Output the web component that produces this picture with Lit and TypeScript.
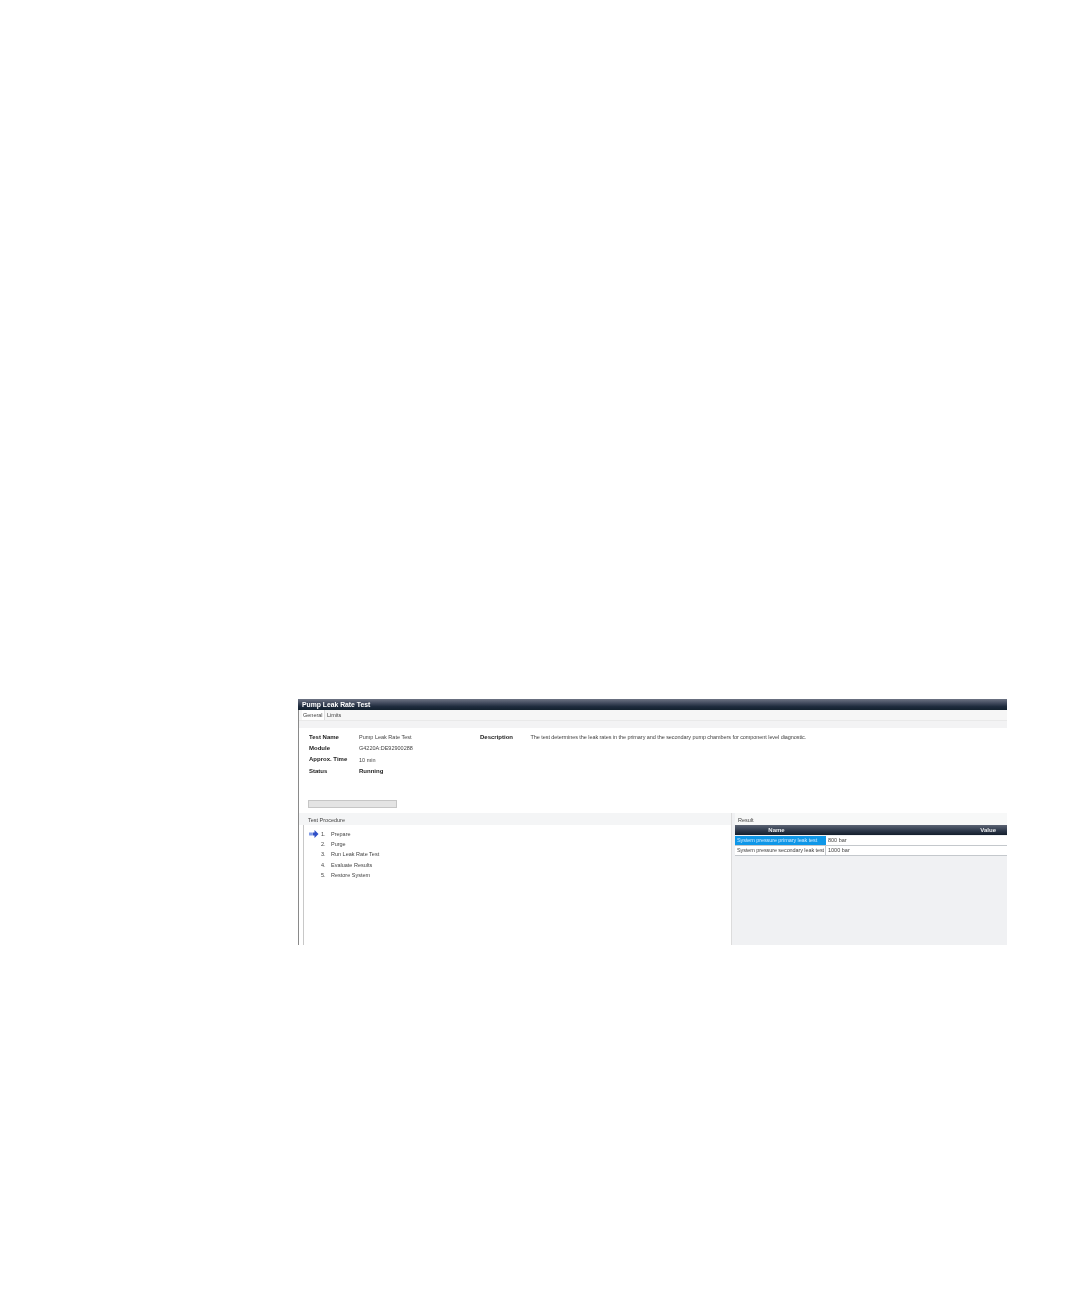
import { LitElement, html, css } from "lit";
import { customElement } from "lit/decorators.js";

const info: [string, string, boolean][] = [
  ["Test Name", "Pump Leak Rate Test", false],
  ["Module", "G4220A:DE92900288", false],
  ["Approx. Time", "10 min", false],
  ["Status", "Running", true],
];
const steps = ["Prepare", "Purge", "Run Leak Rate Test", "Evaluate Results", "Restore System"];

@customElement("app-root")
export class AppRoot extends LitElement {
  static styles = css`
    :host { display: block; height: 1296px; background: #fff; font-family: "Liberation Sans", Arial, sans-serif; color: #444; overflow: hidden; }
    .page { padding: 699px 0 0 298px; }
    .win { width: 709px; height: 246px; display: flex; flex-direction: column; overflow: hidden; filter: blur(0.3px); font-size: 5.5px; }
    .title { height: 11px; flex: none; box-sizing: border-box; padding-left: 4px; background: linear-gradient(#6d7484 0%, #454d60 35%, #1d2a3c 70%, #14222f 100%); color: #fff; font-weight: 700; font-size: 6.8px; line-height: 11px; }
    .body { flex: 1; min-height: 0; display: flex; flex-direction: column; border-left: 1px solid #8a8a8a; }
    .tabs { height: 11px; flex: none; box-sizing: border-box; display: flex; align-items: flex-end; padding-left: 3px; background: #f6f6f6; border-bottom: 1px solid #e9e9e9; }
    .tab { padding: 0 3px 0 2px; line-height: 10px; height: 10px; }
    .tab.on { background: #fff; padding: 0 0 0 1px; width: 23px; box-sizing: border-box; border-right: 1px solid #dedede; }
    .strip { height: 7px; flex: none; background: #f3f3f4; }
    .info { height: 85px; flex: none; box-sizing: border-box; display: flex; padding: 3.5px 0 0 10px; position: relative; background: #fff; }
    .grid { width: 171px; flex: none; display: grid; grid-template-columns: 50px 1fr; grid-auto-rows: 11.3px; align-items: center; }
    .k, .b { font-weight: 700; color: #1c1c1c; font-size: 6px; margin-top: -0.7px; }
    .descl { width: 50.5px; flex: none; font-weight: 700; color: #1c1c1c; font-size: 6px; line-height: 10.6px; }
    .desc { line-height: 11.3px; white-space: nowrap; letter-spacing: -0.065px; }
    .bar { position: absolute; left: 9px; top: 72px; width: 89px; height: 8px; box-sizing: border-box; background: #e4e4e4; border: 1px solid #c6c6c6; }
    .panels { flex: 1; min-height: 0; display: flex; }
    .left { width: 432px; flex: none; display: flex; flex-direction: column; }
    .right { flex: 1; min-width: 0; display: flex; flex-direction: column; background: #f0f1f3; border-left: 1px solid #dcdcdc; box-sizing: border-box; padding-left: 3px; }
    .head { height: 12px; flex: none; box-sizing: border-box; padding: 1.5px 0 0 9px; line-height: 11px; background: #f4f5f6; }
    .right .head { padding-left: 3px; background: #f7f8f8; }
    .list { flex: 1; border-left: 1px solid #c8c8c8; margin-left: 4px; background: #fff; padding-top: 3.5px; }
    .row { height: 10.35px; display: flex; align-items: center; }
    .ico { width: 11px; height: 10px; flex: none; margin-left: 5px; margin-right: 1px; }
    .num { width: 10px; flex: none; }
    .thead { height: 11px; flex: none; box-sizing: border-box; display: flex; background: linear-gradient(#5c6474, #2b3648 60%, #141e2c); background-size: 100% 10px; background-repeat: no-repeat; color: #e9ebee; font-weight: 700; font-size: 6px; line-height: 11px; }
    .c1 { width: 91px; flex: none; box-sizing: border-box; }
    .c2 { flex: 1; min-width: 0; }
    .thead .c1 { text-align: center; padding-right: 8px; }
    .thead .c2 { text-align: right; padding-right: 11px; }
    .tr { height: 10px; display: flex; line-height: 9.5px; background: #fff; border-bottom: 1px solid #c4c8cc; box-sizing: border-box; white-space: nowrap; }
    .tr .c1 { padding-left: 2px; border-right: 1px solid #c4c8cc; letter-spacing: -0.09px; }
    .tr .c2 { padding-left: 2px; }
    .tr .c1.sel { background: #0f97e8; color: #cfeaff; border-right: none; }
  `;

  render() {
    return html`<div class="page"><div class="win">
      <div class="title">Pump Leak Rate Test</div>
      <div class="body">
        <div class="tabs"><div class="tab on">General</div><div class="tab">Limits</div></div>
        <div class="strip"></div>
        <div class="info">
          <div class="grid">
            ${info.map(([k, v, b]) => html`<div class="k">${k}</div><div class=${b ? "b" : ""}>${v}</div>`)}
          </div>
          <div class="descl">Description</div>
          <div class="desc">The test determines the leak rates in the primary and the secondary pump chambers for component level diagnostic.</div>
          <div class="bar"></div>
        </div>
        <div class="panels">
          <div class="left">
            <div class="head">Test Procedure</div>
            <div class="list">
              ${steps.map((s, i) => html`<div class="row">
                <div class="ico">${i === 0 ? html`<svg width="11" height="10" viewBox="0 0 11 10"><path d="M0 3.5h3v3H0z" fill="#7f9ae6"/><path d="M3.5 3.5h2V1L9.5 5 5.5 9V6.5h-2z" fill="#2f4fc8"/></svg>` : ""}</div>
                <div class="num">${i + 1}.</div><div>${s}</div>
              </div>`)}
            </div>
          </div>
          <div class="right">
            <div class="head">Result</div>
            <div class="thead"><div class="c1">Name</div><div class="c2">Value</div></div>
            <div class="tr"><div class="c1 sel">System pressure primary leak test</div><div class="c2">800 bar</div></div>
            <div class="tr"><div class="c1">System pressure secondary leak test</div><div class="c2">1000 bar</div></div>
          </div>
        </div>
      </div>
    </div></div>`;
  }
}
